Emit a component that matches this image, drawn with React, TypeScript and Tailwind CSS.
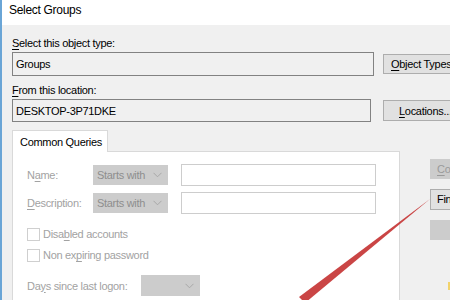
import React from "react";

// Dialog "Select Groups" — bản dựng lại hộp thoại Windows.

function Chevron({ className }: { className?: string }) {
  return (
    <svg width="9" height="6" viewBox="0 0 9 6" className={className}>
      <path d="M0.5 0.8 L4.5 4.8 L8.5 0.8" fill="none" stroke="#a8a8a8" strokeWidth="1" />
    </svg>
  );
}

function Mn({ children }: { children: React.ReactNode }) {
  return <span className="underline underline-offset-2">{children}</span>;
}

function DisabledSelect({ w, text }: { w: string; text?: string }) {
  return (
    <div className={`flex h-[20px] shrink-0 items-center justify-between bg-[#cccccc] pl-[4px] pr-[6px] ${w}`}>
      <span className="text-[#8e8e8e]">{text}</span>
      <Chevron />
    </div>
  );
}

function Checkbox({ label }: { label: React.ReactNode }) {
  return (
    <div className="flex items-center gap-[3px]">
      <span className="h-[13px] w-[13px] border border-[#cfcfcf] bg-white" />
      <span className="text-[#a2a2a2]">{label}</span>
    </div>
  );
}

export default function App() {
  return (
    <div
      className="relative h-[300px] w-[450px] overflow-hidden border-l-2 border-[#6aa5d6] bg-[#f0f0f0] text-[11px] leading-[14px] tracking-[-0.3px] whitespace-nowrap text-black"
      style={{ fontFamily: '"Liberation Sans", Arial, sans-serif' }}
    >
      {/* Thanh tiêu đề */}
      <div className="h-[25px] bg-white pl-[7px] pt-[3px] text-[12px] leading-[14px]">Select Groups</div>

      <div className="pl-[10px]">
        <div className="mt-[11px]">
          <Mn>S</Mn>elect this object type:
        </div>
        <div className="mt-[2px] flex items-center">
          <div className="flex h-[24px] w-[362px] shrink-0 items-center border border-[#828282] px-[3px]">Groups</div>
          <button className="ml-[9px] h-[20px] w-[80px] shrink-0 border border-[#adadad] bg-[#e1e1e1] pl-[7px] text-left">
            <Mn>O</Mn>bject Types
          </button>
        </div>

        <div className="mt-[7px]">
          <Mn>F</Mn>rom this location:
        </div>
        <div className="mt-[2px] flex items-center">
          <div className="flex h-[23px] w-[359px] shrink-0 items-center border border-[#828282] px-[3px]">DESKTOP-3P71DKE</div>
          <button className="ml-[12px] h-[21px] w-[80px] shrink-0 border border-[#adadad] bg-[#e1e1e1] pl-[15px] text-left">
            <Mn>L</Mn>ocations...
          </button>
        </div>

        <div className="mt-[8px] flex">
          {/* Khung tab Common Queries */}
          <div className="w-[388px] shrink-0">
            <div className="relative z-10 -mb-px flex h-[22px] w-[96px] items-center border border-b-0 border-[#d9d9d9] bg-white pl-[7px]">
              Common Queries
            </div>
            <div className="h-[160px] border border-[#d9d9d9] bg-white pl-[14px] pt-[12px] text-[#a2a2a2]">
              <div className="flex items-center">
                <span className="w-[66px] shrink-0">
                  N<Mn>a</Mn>me:
                </span>
                <DisabledSelect w="w-[75px]" text="Starts with" />
                <div className="ml-[13px] h-[22px] w-[195px] shrink-0 border border-[#cdcdcd]" />
              </div>
              <div className="mt-[6px] flex items-center">
                <span className="w-[66px] shrink-0">
                  <Mn>D</Mn>escription:
                </span>
                <DisabledSelect w="w-[75px]" text="Starts with" />
                <div className="ml-[13px] h-[22px] w-[195px] shrink-0 border border-[#cdcdcd]" />
              </div>
              <div className="mt-[13px] flex flex-col gap-[7px]">
                <Checkbox
                  label={
                    <>
                      Disa<Mn>b</Mn>led accounts
                    </>
                  }
                />
                <Checkbox
                  label={
                    <>
                      Non ex<Mn>p</Mn>iring password
                    </>
                  }
                />
              </div>
              <div className="mt-[13px] flex items-center">
                <span className="w-[114px] shrink-0">
                  Da<Mn>y</Mn>s since last logon:
                </span>
                <DisabledSelect w="w-[59px] h-[21px]" />
              </div>
            </div>
          </div>

          {/* Cột nút bên phải */}
          <div className="ml-[30px] mt-[29px] flex shrink-0 flex-col gap-[10px]">
            <div className="h-[20px] w-[60px] bg-[#cccccc] pl-[7px] leading-[20px] text-[#9a9a9a]">
              <Mn>C</Mn>olumns...
            </div>
            <div className="h-[21px] w-[60px] border border-[#adadad] bg-[#e1e1e1] pl-[6px] leading-[19px]">
              Find Now
            </div>
            <div className="h-[20px] w-[60px] bg-[#cccccc]" />
            <div className="ml-[18px] mt-[32px] h-[8px] w-[3px] bg-[#f2d36b]" />
          </div>
        </div>
      </div>

      {/* Mũi tên đỏ chú thích */}
      <svg className="pointer-events-none absolute left-0 top-0" width="450" height="300" viewBox="0 0 450 300">
        <polygon points="428,199 303,303 297,297" fill="#c73b3b" opacity="0.95" />
      </svg>
    </div>
  );
}
